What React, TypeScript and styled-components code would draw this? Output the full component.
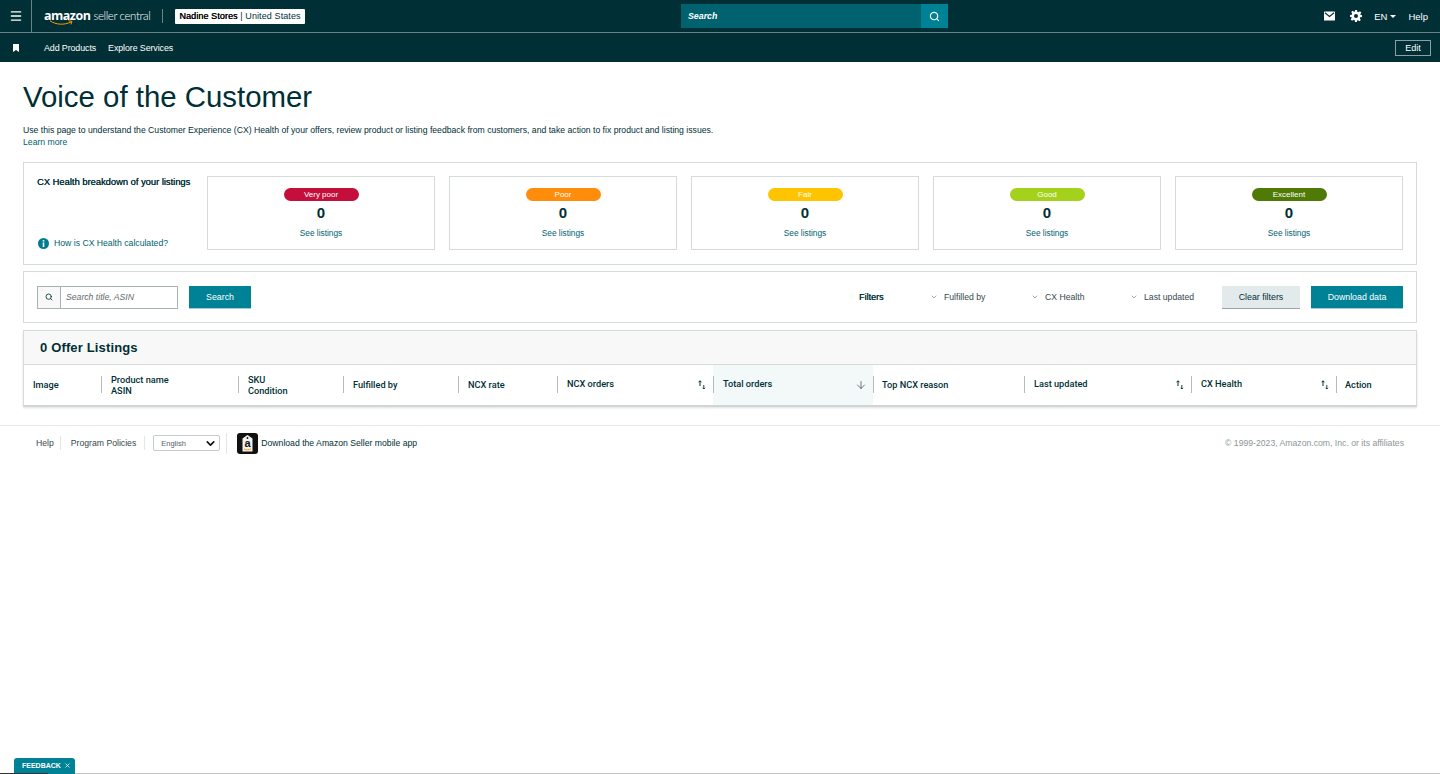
import React from "react";
import styled, { createGlobalStyle } from "styled-components";
import { Search as SearchIcon, Menu, ChevronDown, ArrowDown, X } from "lucide-react";

const GlobalStyle = createGlobalStyle`
  html, body {
    margin: 0;
    padding: 0;
    background: #fff;
    font-family: "Liberation Sans", Arial, sans-serif;
    color: #002f36;
    overflow: hidden;
  }
  * { box-sizing: border-box; }
`;

const healthCards = [
  { label: "Very poor", color: "#c40f3c", text: "#fff" },
  { label: "Poor", color: "#ff8c0a", text: "#fff" },
  { label: "Fair", color: "#ffc400", text: "#fff" },
  { label: "Good", color: "#a4d21c", text: "#fff" },
  { label: "Excellent", color: "#4f7a06", text: "#fff" },
];

const columns = [
  { width: 78, lines: ["Image"] },
  { width: 137, lines: ["Product name", "ASIN"] },
  { width: 105, lines: ["SKU", "Condition"] },
  { width: 115, lines: ["Fulfilled by"] },
  { width: 99, lines: ["NCX rate"] },
  { width: 156, lines: ["NCX orders"], sort: true, lift: true },
  { width: 160, lines: ["Total orders"], active: true, lift: true },
  { width: 151, lines: ["Top NCX reason"], tight: true },
  { width: 167, lines: ["Last updated"], sort: true, lift: true },
  { width: 145, lines: ["CX Health"], sort: true, lift: true },
  { width: 81, lines: ["Action"], tight: true },
];

const SortIcon = () => (
  <svg width="8" height="10" viewBox="0 0 8 10" fill="none" stroke="#002f36" strokeWidth="1">
    <path d="M2 6V0.800M0.500 2.300L2 0.800L3.500 2.300" />
    <path d="M5.800 5v4M4.600 7.800L5.800 9L7 7.800" strokeWidth="0.9" />
  </svg>
);

const MailIcon = () => (
  <svg width="11" height="10" viewBox="0 0 12 10">
    <path fill="#fff" d="M0.5 0h11a.5.5 0 0 1 .5.5V9.5a.5.5 0 0 1-.5.5H.5a.5.5 0 0 1-.5-.5V.5A.5.5 0 0 1 .5 0z" />
    <path fill="none" stroke="#002f36" strokeWidth="1.2" d="M1 1.5L6 5.5L11 1.5" />
  </svg>
);

const GearIcon = () => (
  <svg width="12" height="12" viewBox="0 0 24 24">
    <path
      fill="#fff"
      fillRule="evenodd"
      d="M10 0h4l.7 3.4 2.2.9L19.8 2.4l2.8 2.8-1.9 2.9.9 2.2L24 10v4l-3.4.7-.9 2.2 1.9 2.9-2.8 2.8-2.9-1.9-2.2.9L14 24h-4l-.7-3.4-2.2-.9-2.9 1.9-2.8-2.8 1.9-2.9-.9-2.2L0 14v-4l3.4-.7.9-2.2-1.9-2.9 2.8-2.8 2.9 1.9 2.2-.9zM12 8a4 4 0 1 0 0 8 4 4 0 0 0 0-8z"
    />
  </svg>
);

const BookmarkIcon = () => (
  <svg width="6" height="8" viewBox="0 0 6 8">
    <path fill="#fff" d="M0 0h6v8L3 6 0 8z" />
  </svg>
);

const InfoIcon = () => (
  <svg width="11" height="11" viewBox="0 0 11 11">
    <circle cx="5.5" cy="5.5" r="5.5" fill="#007c8f" />
    <rect x="4.7" y="2" width="1.6" height="1.6" fill="#fff" />
    <rect x="4.7" y="4.5" width="1.6" height="4.5" fill="#fff" />
  </svg>
);

const AppBadge = () => (
  <svg width="21" height="21" viewBox="0 0 21 21">
    <rect width="21" height="21" rx="3" fill="#111" />
    <path fill="#f1f1ee" d="M10.5 2l5 3.500v13h-10v-13z" />
    <circle cx="10.5" cy="5" r="0.9" fill="#111" />
    <BadgeLetter x="10.5" y="14" textAnchor="middle">
      a
    </BadgeLetter>
    <path fill="none" stroke="#f90" strokeWidth="1" d="M7 16c1.800 1 5 1 7 0" />
  </svg>
);

export default function App() {
  return (
    <>
      <GlobalStyle />
      <TopBar>
        <BurgerCell>
          <Menu size={14} color="#fff" strokeWidth={2.2} />
        </BurgerCell>
        <Logo>
          <LogoWord>amazon</LogoWord>
          <LogoLight>seller central</LogoLight>
          <Smile width="25" height="6" viewBox="0 0 25 6">
            <path fill="none" stroke="#f90" strokeWidth="1" d="M1 0.800c6 4 14 4.500 21 1.200M19.500 0.800l3.500.6-1 3" />
          </Smile>
        </Logo>
        <LogoDivider />
        <StoreBadge>
          <strong>Nadine Stores</strong> | United States
        </StoreBadge>
        <TopSearch>
          <TopSearchField>Search</TopSearchField>
          <TopSearchButton>
            <SearchIcon size={11} color="#fff" strokeWidth={2.5} />
          </TopSearchButton>
        </TopSearch>
        <TopActions>
          <TopIconSlot $gap={15}>
            <MailIcon />
          </TopIconSlot>
          <TopIconSlot $gap={12}>
            <GearIcon />
          </TopIconSlot>
          <Lang>
            EN <Caret />
          </Lang>
          <TopLink>Help</TopLink>
        </TopActions>
      </TopBar>
      <NavBar>
        <BookmarkCell>
          <BookmarkIcon />
        </BookmarkCell>
        <NavLink>Add Products</NavLink>
        <NavLink>Explore Services</NavLink>
        <EditButton>Edit</EditButton>
      </NavBar>

      <Main>
        <Title>Voice of the Customer</Title>
        <Intro>
          Use this page to understand the Customer Experience (CX) Health of your offers, review product or listing
          feedback from customers, and take action to fix product and listing issues.
        </Intro>
        <LearnMore>Learn more</LearnMore>

        <HealthPanel>
          <HealthIntro>
            <HealthHeading>CX Health breakdown of your listings</HealthHeading>
            <HealthHelp>
              <InfoIcon />
              How is CX Health calculated?
            </HealthHelp>
          </HealthIntro>
          <HealthCards>
            {healthCards.map((card) => (
              <HealthCard key={card.label}>
                <Pill $color={card.color} $text={card.text}>
                  {card.label}
                </Pill>
                <Count>0</Count>
                <SeeListings>See listings</SeeListings>
              </HealthCard>
            ))}
          </HealthCards>
        </HealthPanel>

        <FilterPanel>
          <SearchBox>
            <SearchAddon>
              <SearchIcon size={8} color="#002f36" strokeWidth={2.5} />
            </SearchAddon>
            <SearchPlaceholder>Search title, ASIN</SearchPlaceholder>
          </SearchBox>
          <PrimaryButton $width={62}>Search</PrimaryButton>
          <FilterGroup>
            <FiltersLabel>Filters</FiltersLabel>
            <FilterItem $width={101}>
              <ChevronDown size={8} color="#6c7778" />
              Fulfilled by
            </FilterItem>
            <FilterItem $width={99}>
              <ChevronDown size={8} color="#6c7778" />
              CX Health
            </FilterItem>
            <FilterItem $width={92}>
              <ChevronDown size={8} color="#6c7778" />
              Last updated
            </FilterItem>
          </FilterGroup>
          <ClearButton>Clear filters</ClearButton>
          <PrimaryButton $width={92}>Download data</PrimaryButton>
        </FilterPanel>

        <TablePanel>
          <TableTitle>0 Offer Listings</TableTitle>
          <HeaderRow>
            {columns.map((col, i) => (
              <HeaderCell
                key={col.lines[0]}
                $width={col.width}
                $active={col.active}
                $first={i === 0}
                $tight={col.tight}
              >
                <HeaderText $lift={col.lift}>
                  {col.lines.map((line) => (
                    <div key={line}>{line}</div>
                  ))}
                </HeaderText>
                {col.sort && <SortIcon />}
                {col.active && <ArrowDown size={12} color="#3f5053" strokeWidth={1.5} />}
              </HeaderCell>
            ))}
          </HeaderRow>
        </TablePanel>
      </Main>

      <Footer>
        <FooterLink>Help</FooterLink>
        <FooterLink $pad>Program Policies</FooterLink>
        <LangSelect>
          English
          <ChevronDown size={13} color="#111" strokeWidth={3} />
        </LangSelect>
        <FooterApp>
          <AppBadge />
          Download the Amazon Seller mobile app
        </FooterApp>
        <Copyright>© 1999-2023, Amazon.com, Inc. or its affiliates</Copyright>
      </Footer>

      <FeedbackTab>
        FEEDBACK <X size={7} color="#fff" strokeWidth={2.5} />
      </FeedbackTab>
      <PageEdge />
    </>
  );
}

const TopBar = styled.header`
  height: 33px;
  background: #002f36;
  border-bottom: 1px solid #6c8185;
  display: flex;
  align-items: center;
  color: #fff;
`;

const BurgerCell = styled.div`
  width: 32px;
  height: 32px;
  border-right: 1px solid #6c8185;
  display: flex;
  align-items: center;
  justify-content: center;
  flex-shrink: 0;
`;

const Logo = styled.div`
  position: relative;
  display: flex;
  align-items: baseline;
  margin-left: 12px;
  width: 107px;
  height: 16px;
  flex-shrink: 0;
`;

const LogoWord = styled.span`
  font-family: "Open Sans", sans-serif;
  font-size: 12.500px;
  line-height: 16px;
  font-weight: 700;
  letter-spacing: -0.5px;
`;

const LogoLight = styled.span`
  font-family: Lato, sans-serif;
  font-size: 11.500px;
  line-height: 16px;
  font-weight: 300;
  margin-left: 3px;
  letter-spacing: -0.4px;
  white-space: nowrap;
`;

const Smile = styled.svg`
  position: absolute;
  left: 5px;
  top: 12px;
`;

const BadgeLetter = styled.text`
  font-family: "Liberation Sans", sans-serif;
  font-size: 11px;
  font-weight: 700;
  fill: #111;
`;

const LogoDivider = styled.div`
  width: 1px;
  height: 14px;
  background: #6c8185;
  margin-left: 11px;
`;

const StoreBadge = styled.div`
  margin-left: 12px;
  width: 130px;
  height: 15px;
  background: #fff;
  color: #002f36;
  border-radius: 1px;
  font-size: 9px;
  line-height: 15px;
  text-align: center;
  white-space: nowrap;
  letter-spacing: 0.1px;
  strong {
    font-weight: 400;
    color: #000;
    text-shadow: 0.3px 0 0 #000;
  }
`;

const TopSearch = styled.div`
  margin-left: 376px;
  width: 267px;
  height: 24px;
  display: flex;
`;

const TopSearchField = styled.div`
  flex: 1;
  background: #00626f;
  color: #fff;
  font-size: 8.800px;
  line-height: 24px;
  font-style: italic;
  font-weight: 700;
  padding-left: 7px;
`;

const TopSearchButton = styled.div`
  width: 27px;
  background: #008296;
  display: flex;
  align-items: center;
  justify-content: center;
`;

const TopActions = styled.div`
  margin-left: auto;
  display: flex;
  align-items: center;
  padding-right: 12px;
  font-size: 9.500px;
`;

const TopIconSlot = styled.span<{ $gap: number }>`
  display: flex;
  margin-right: ${(p) => p.$gap}px;
`;

const Lang = styled.span`
  display: flex;
  align-items: center;
  gap: 3px;
  margin-right: 12px;
`;

const Caret = styled.i`
  display: inline-block;
  border-top: 3px solid #fff;
  border-left: 3px solid transparent;
  border-right: 3px solid transparent;
`;

const TopLink = styled.span``;

const NavBar = styled.nav`
  height: 29px;
  background: #002f36;
  display: flex;
  align-items: center;
  color: #fff;
`;

const BookmarkCell = styled.div`
  width: 44px;
  padding-left: 13px;
  display: flex;
  align-items: center;
`;

const NavLink = styled.span`
  font-size: 8.900px;
  margin-right: 12px;
  letter-spacing: -0.1px;
`;

const EditButton = styled.div`
  margin-left: auto;
  margin-right: 9px;
  width: 36px;
  height: 16px;
  border: 1px solid #8ba0a3;
  font-size: 9px;
  line-height: 14px;
  text-align: center;
`;

const Main = styled.main`
  padding: 0 23px;
`;

const Title = styled.h1`
  margin: 0;
  padding-top: 18px;
  font-size: 29.400px;
  line-height: 34px;
  font-weight: 400;
  color: #002f36;
`;

const Intro = styled.p`
  margin: 10px 0 0;
  font-size: 8.660px;
  line-height: 12px;
  color: #002f36;
  white-space: nowrap;
`;

const LearnMore = styled.a`
  display: block;
  font-size: 8.660px;
  line-height: 12px;
  margin-top: 0;
  color: #00626f;
`;

const HealthPanel = styled.section`
  margin-top: 14px;
  height: 103px;
  border: 1px solid #d5dbdb;
  padding: 13px 13px 14px 13px;
  display: flex;
`;

const HealthIntro = styled.div`
  width: 170px;
  display: flex;
  flex-direction: column;
  justify-content: space-between;
  flex-shrink: 0;
`;

const HealthHeading = styled.div`
  font-size: 9.350px;
  line-height: 12px;
  color: #002f36;
  text-shadow: 0.25px 0 0 #002f36;
  white-space: nowrap;
`;

const HealthHelp = styled.a`
  display: flex;
  align-items: center;
  gap: 5px;
  font-size: 8.660px;
  line-height: 12px;
  margin-bottom: 1px;
  padding-left: 1px;
  color: #00626f;
`;

const HealthCards = styled.div`
  flex: 1;
  display: grid;
  grid-template-columns: repeat(5, 228px);
  justify-content: space-between;
`;

const HealthCard = styled.div`
  border: 1px solid #d5dbdb;
  display: flex;
  flex-direction: column;
  align-items: center;
  padding-top: 11px;
`;

const Pill = styled.div<{ $color: string; $text: string }>`
  width: 75px;
  height: 13px;
  border-radius: 7px;
  background: ${(p) => p.$color};
  color: ${(p) => p.$text};
  font-size: 8px;
  line-height: 13px;
  text-align: center;
`;

const Count = styled.div`
  font-size: 15px;
  line-height: 17px;
  margin-top: 3px;
  font-weight: 700;
  color: #002f36;
`;

const SeeListings = styled.a`
  margin-top: 6px;
  font-size: 8.300px;
  line-height: 12px;
  color: #00626f;
`;

const FilterPanel = styled.section`
  margin-top: 6px;
  height: 52px;
  border: 1px solid #d5dbdb;
  padding: 0 13px;
  display: flex;
  align-items: center;
`;

const SearchBox = styled.div`
  width: 141px;
  height: 23px;
  border: 1px solid #a6b2b3;
  display: flex;
  margin-right: 11px;
`;

const SearchAddon = styled.div`
  width: 23px;
  background: #f8f8f8;
  border-right: 1px solid #a6b2b3;
  display: flex;
  align-items: center;
  justify-content: center;
`;

const SearchPlaceholder = styled.div`
  padding-left: 5px;
  font-size: 8.660px;
  line-height: 21px;
  font-style: italic;
  color: #5f6b6c;
`;

const PrimaryButton = styled.div<{ $width: number }>`
  width: ${(p) => p.$width}px;
  height: 23px;
  background: #008296;
  color: #fff;
  font-size: 8.800px;
  line-height: 22px;
  text-align: center;
  border-bottom: 1px solid #9fd0d8;
`;

const FilterGroup = styled.div`
  margin-left: auto;
  display: flex;
  align-items: center;
`;

const FiltersLabel = styled.div`
  width: 71px;
  font-size: 9px;
  text-shadow: 0.25px 0 0 #002f36;
`;

const FilterItem = styled.div<{ $width: number }>`
  width: ${(p) => p.$width}px;
  display: flex;
  align-items: center;
  gap: 6px;
  font-size: 8.660px;
  color: #33494d;
  white-space: nowrap;
`;

const ClearButton = styled.div`
  margin-right: 11px;
  width: 78px;
  height: 23px;
  background: #e3eaeb;
  color: #002f36;
  font-size: 8.800px;
  line-height: 22px;
  text-align: center;
  border-bottom: 1px solid #9aa5a6;
`;

const TablePanel = styled.section`
  margin-top: 7px;
  border: 1px solid #d5dbdb;
  border-bottom: 2px solid #d0d5d5;
  box-shadow: 0 1px 2px rgba(0, 0, 0, 0.12);
`;

const TableTitle = styled.div`
  height: 34px;
  padding-left: 16px;
  background: #f8f8f8;
  border-bottom: 1px solid #d5dbdb;
  font-size: 13px;
  line-height: 33px;
  font-weight: 700;
  letter-spacing: 0.15px;
  color: #002f36;
`;

const HeaderRow = styled.div`
  display: flex;
  height: 40px;
`;

const HeaderCell = styled.div<{ $width: number; $active?: boolean; $first?: boolean; $tight?: boolean }>`
  position: relative;
  width: ${(p) => p.$width - (p.$first ? 1 : 0)}px;
  flex-shrink: 0;
  display: flex;
  align-items: center;
  justify-content: space-between;
  padding: 0 ${(p) => (p.$active ? 6 : 7)}px 0 ${(p) => (p.$first || p.$tight ? 9 : 10)}px;
  background: ${(p) => (p.$active ? "#f3f8f9" : "transparent")};
  &::before {
    content: "";
    display: ${(p) => (p.$first ? "none" : "block")};
    position: absolute;
    left: 0;
    top: 11px;
    height: 17px;
    width: 1px;
    background: #b4bcbd;
  }
`;

const HeaderText = styled.div<{ $lift?: boolean }>`
  font-family: Roboto, "Liberation Sans", sans-serif;
  font-size: 9.200px;
  font-weight: 500;
  line-height: 11.500px;
  color: #002f36;
  margin-top: ${(p) => (p.$lift ? "-2px" : "0")};
  white-space: nowrap;
`;

const Footer = styled.footer`
  margin-top: 18px;
  height: 35px;
  border-top: 1px solid #e8ebeb;
  padding: 0 36px;
  display: flex;
  align-items: center;
  font-size: 8.660px;
  color: #33494d;
`;

const FooterLink = styled.span<{ $pad?: boolean }>`
  padding: 0 ${(p) => (p.$pad ? 8 : 6)}px 0 ${(p) => (p.$pad ? 10 : 0)}px;
  border-right: 1px solid #e3e6e6;
  line-height: 14px;
`;

const LangSelect = styled.div`
  margin-left: 8px;
  width: 67px;
  height: 16px;
  border: 1px solid #c5cccc;
  border-radius: 2px;
  padding: 0 2px 0 7px;
  font-size: 7.500px;
  color: #55646a;
  display: flex;
  align-items: center;
  justify-content: space-between;
`;

const FooterApp = styled.div`
  display: flex;
  align-items: center;
  gap: 3px;
  margin-left: 6px;
  padding-left: 10px;
  border-left: 1px solid #e3e6e6;
  color: #002f36;
`;

const Copyright = styled.div`
  margin-left: auto;
  color: #8c9697;
`;

const FeedbackTab = styled.div`
  position: fixed;
  left: 14px;
  bottom: 0;
  width: 61px;
  height: 16px;
  border-radius: 3px 3px 0 0;
  background: #008296;
  color: #fff;
  font-size: 7px;
  font-weight: 700;
  display: flex;
  align-items: center;
  gap: 3px;
  padding: 0 0 1px 8px;
`;

const PageEdge = styled.div`
  position: fixed;
  left: 0;
  right: 0;
  bottom: 0;
  height: 1px;
  background: linear-gradient(to right, #333 0 48px, transparent 48px 75px, #c4c4c4 75px);
`;
